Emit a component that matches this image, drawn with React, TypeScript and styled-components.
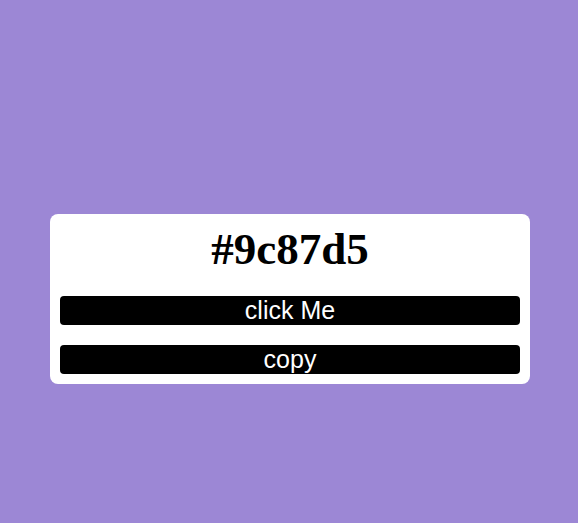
import React from "react";
import styled, { createGlobalStyle } from "styled-components";

const Global = createGlobalStyle`
  html, body {
    margin: 0;
    padding: 0;
    background: #9c87d5;
  }
  body {
    min-height: 523px;
    font-family: "Liberation Serif", serif;
  }
`;

const Page = styled.div`
  min-height: 523px;
  padding-top: 214px;
  box-sizing: border-box;
  display: flex;
  justify-content: center;
  padding-left: 2px;
`;

const Card = styled.div`
  width: 480px;
  box-sizing: border-box;
  background: #ffffff;
  border-radius: 8px;
  padding: 10px;
  display: flex;
  flex-direction: column;
  height: 170px;
`;

const ColorCode = styled.h1`
  margin: 0 0 21px;
  font-family: "Liberation Serif", serif;
  font-weight: bold;
  font-size: 45px;
  line-height: 51px;
  text-align: center;
  color: #000;
`;

const ActionButton = styled.button<{ $spaced?: boolean }>`
  display: block;
  width: 100%;
  height: 29px;
  margin-top: ${(p) => (p.$spaced ? "20px" : "0")};
  padding: 0;
  border: none;
  border-radius: 4px;
  background: #000;
  color: #fff;
  font-family: "Liberation Sans", Arial, sans-serif;
  font-size: 25px;
  line-height: 29px;
  cursor: pointer;
`;

export default function App() {
  return (
    <>
      <Global />
      <Page>
        <Card>
          <ColorCode>#9c87d5</ColorCode>
          <ActionButton>click Me</ActionButton>
          <ActionButton $spaced>copy</ActionButton>
        </Card>
      </Page>
    </>
  );
}
